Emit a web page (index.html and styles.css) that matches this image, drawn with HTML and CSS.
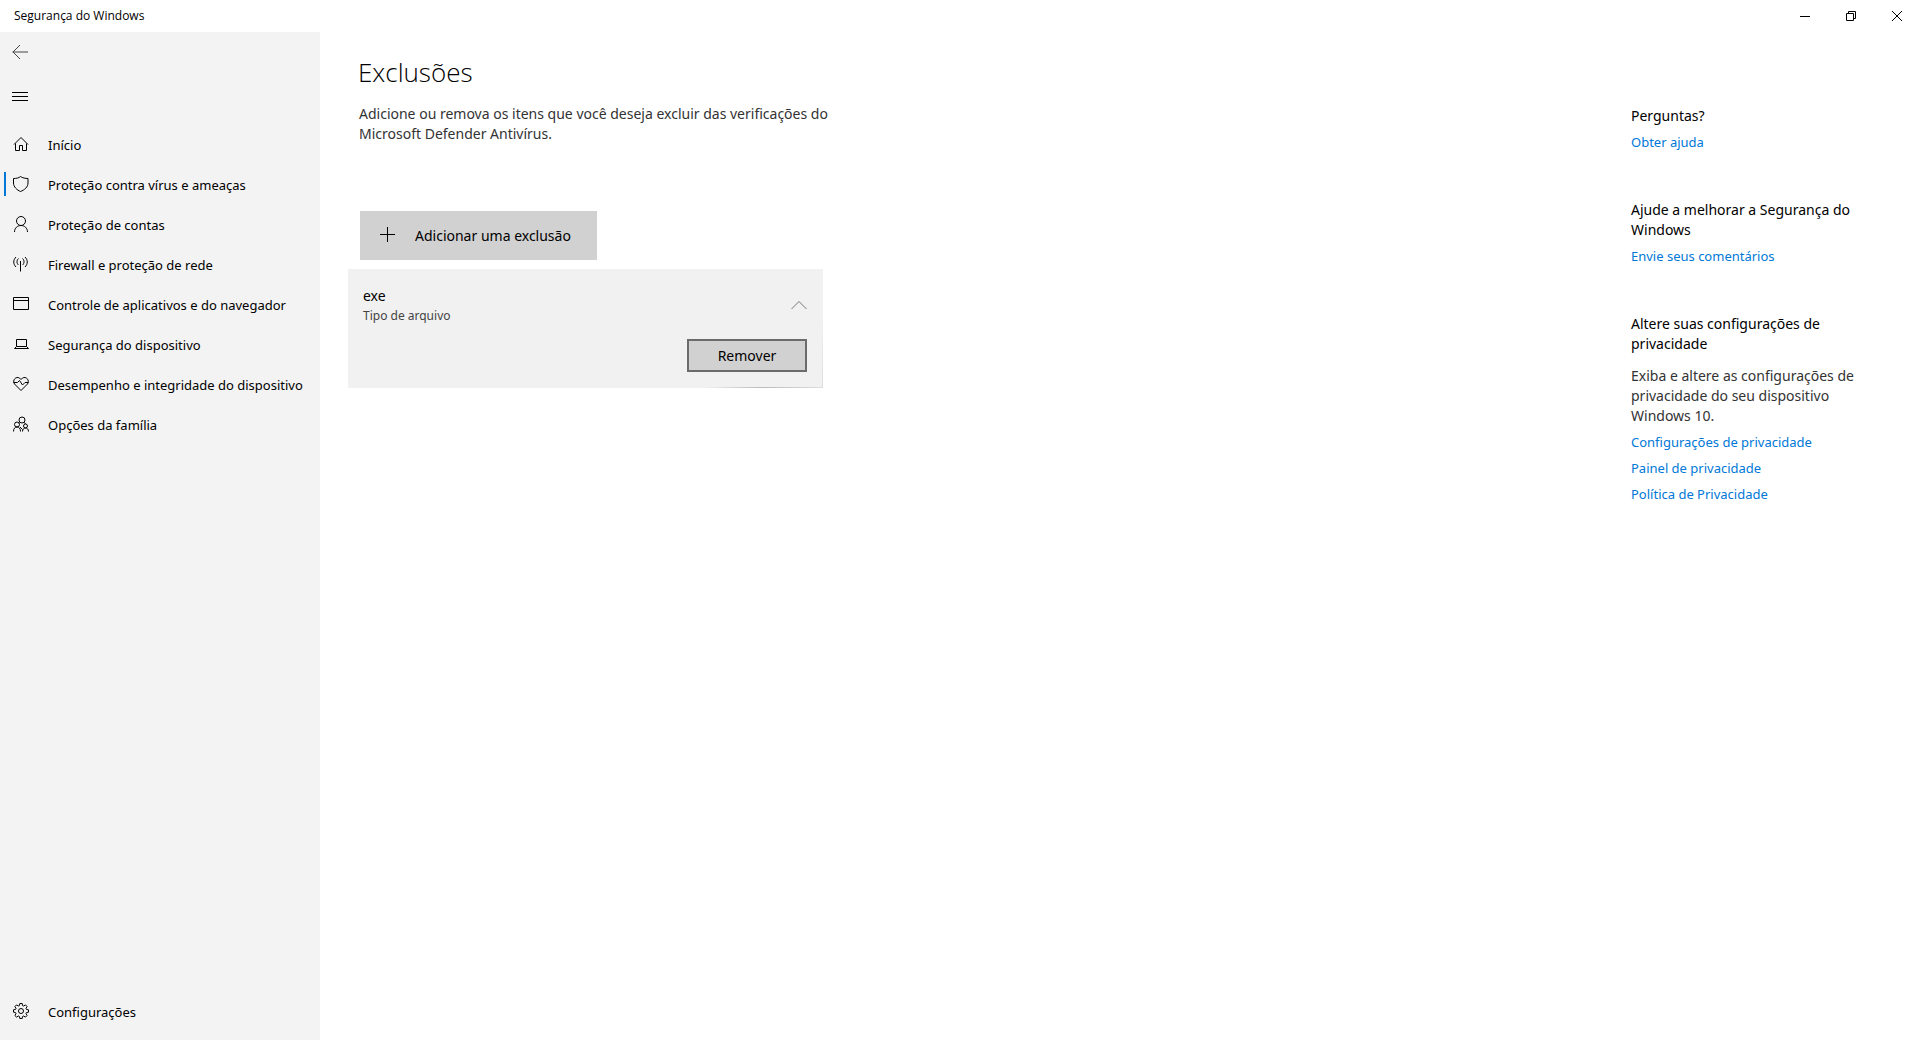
FILE: index.html
```html
<!DOCTYPE html>
<html lang="pt-BR">
<head>
<meta charset="utf-8">
<meta name="viewport" content="width=device-width, initial-scale=1">
<title>Segurança do Windows</title>
<link rel="stylesheet" href="styles.css">
</head>
<body>
<header class="titlebar">
  <span class="titlebar-text">Segurança do Windows</span>
  <div class="window-controls">
    <button type="button" class="window-button" aria-label="Minimizar"><svg width="10" height="10"><path d="M0 5.500H10"/></svg></button>
    <button type="button" class="window-button" aria-label="Restaurar"><svg width="10" height="10"><path d="M.5 2.500H7.500V9.500H.5ZM2.500 2.500V.5H9.500V7.500H7.500"/></svg></button>
    <button type="button" class="window-button" aria-label="Fechar"><svg width="10" height="10"><path d="M0 0L10 10M10 0L0 10"/></svg></button>
  </div>
</header>
<div class="app">
  <aside class="sidebar">
    <button type="button" class="icon-button" aria-label="Voltar"><svg class="icon icon-muted" viewBox="0 0 16 16"><path d="M.5 8H16M8 1L1 8L8 15"/></svg></button>
    <button type="button" class="icon-button" aria-label="Menu"><svg class="icon" viewBox="0 0 16 16"><path d="M0 4.500H16M0 8.500H16M0 12.500H16"/></svg></button>
    <nav class="nav">
      <a class="nav-item" href="#"><svg class="icon" viewBox="0 0 16 16"><path d="M1 8.500L8 1.500L15 8.500M2.500 7.500V14.500H6.500V9.500H9.500V14.500H13.500V7.500"/></svg><span>Início</span></a>
      <a class="nav-item nav-item-active" href="#" aria-current="page"><svg class="icon" viewBox="0 0 16 16"><path d="M7.500 .5C6 2 3 2.500.5 2.500V7C.5 11 4 14 7.500 15.500C11.500 14 15 11 15 7V2.500C12.500 2.500 9.500 2 7.500 .5Z"/></svg><span>Proteção contra vírus e ameaças</span></a>
      <a class="nav-item" href="#"><svg class="icon" viewBox="0 0 16 16"><circle cx="8" cy="5" r="4.500"/><path d="M1.500 16C1.500 12 4.500 9.500 8 9.500S14.500 12 14.500 16"/></svg><span>Proteção de contas</span></a>
      <a class="nav-item" href="#"><svg class="icon" viewBox="0 0 16 16"><path d="M7.500 5V15.500M5.500 2.500C3.500 4 3.500 7.500 5.500 9M9.500 2.500C11.500 4 11.500 7.500 9.500 9M3 1C0 4 0 8 3 11M12 1C15 4 15 8 12 11"/></svg><span>Firewall e proteção de rede</span></a>
      <a class="nav-item" href="#"><svg class="icon" viewBox="0 0 16 16"><path d="M.5 1.500H15.500V13.500H.5ZM.5 4.500H15.500"/></svg><span>Controle de aplicativos e do navegador</span></a>
      <a class="nav-item" href="#"><svg class="icon" viewBox="0 0 16 16"><path d="M3.500 3.500H13.500V10.500H3.500ZM3.500 10.500L1.500 12.500H15.500L13.500 10.500"/></svg><span>Segurança do dispositivo</span></a>
      <a class="nav-item" href="#"><svg class="icon" viewBox="0 0 16 16"><path d="M8 14.500L1.500 8C-1 4 3 0 6.500 2L8 3.500L9.500 2C13 0 17 4 14.500 8ZM.5 6.500H4.500L6.500 4.500L9.500 9L12 6.500H15.500"/></svg><span>Desempenho e integridade do dispositivo</span></a>
      <a class="nav-item" href="#"><svg class="icon" viewBox="0 0 16 16"><circle cx="9" cy="4" r="3"/><circle cx="4" cy="8.500" r="2.500"/><circle cx="12.500" cy="10" r="2"/><path d="M.5 15.500C.5 12.500 2 11 4 11S7.500 12.500 7.500 15.500M9.500 15.500C9.500 13 11 12 12.500 12S15.500 13 15.500 15.500M7 6.500L6 7.500M11 6.500C12 7 12.500 7.500 12.500 8M7 11L9.500 13.500"/></svg><span>Opções da família</span></a>
    </nav>
    <a class="nav-item nav-settings" href="#"><svg class="icon" viewBox="0 0 16 16"><circle cx="8" cy="8" r="2.500"/><path d="M6.800.5H9.200L9.600 2.600L10.700 3L12.500 1.900L14.100 3.500L13 5.300L13.400 6.400L15.500 6.800V9.200L13.400 9.600L13 10.700L14.100 12.500L12.500 14.100L10.700 13L9.600 13.400L9.200 15.500H6.800L6.400 13.400L5.300 13L3.500 14.100L1.900 12.500L3 10.700L2.600 9.600L.5 9.200V6.800L2.600 6.400L3 5.300L1.900 3.500L3.500 1.900L5.300 3L6.400 2.600Z"/></svg><span>Configurações</span></a>
  </aside>
  <main class="content">
    <h1 class="page-title">Exclusões</h1>
    <p class="page-intro">Adicione ou remova os itens que você deseja excluir das verificações do Microsoft Defender Antivírus.</p>
    <button type="button" class="add-button"><svg class="icon" viewBox="0 0 16 16"><path d="M7.500 0V15M0 7.500H15"/></svg><span>Adicionar uma exclusão</span></button>
    <section class="exclusion">
      <div class="exclusion-header">
        <div>
          <h2 class="exclusion-name">exe</h2>
          <p class="exclusion-type">Tipo de arquivo</p>
        </div>
        <button type="button" class="collapse-button" aria-label="Recolher"><svg class="icon" viewBox="0 0 16 16"><path d="M.5 11L8 3.500L15.500 11"/></svg></button>
      </div>
      <button type="button" class="remove-button">Remover</button>
    </section>
  </main>
  <aside class="help">
    <section class="help-group">
      <h2 class="help-title">Perguntas?</h2>
      <a class="help-link" href="#">Obter ajuda</a>
    </section>
    <section class="help-group">
      <h2 class="help-title">Ajude a melhorar a Segurança do Windows</h2>
      <a class="help-link" href="#">Envie seus comentários</a>
    </section>
    <section class="help-group">
      <h2 class="help-title">Altere suas configurações de privacidade</h2>
      <p class="help-text">Exiba e altere as configurações de privacidade do seu dispositivo Windows 10.</p>
      <a class="help-link" href="#">Configurações de privacidade</a>
      <a class="help-link" href="#">Painel de privacidade</a>
      <a class="help-link" href="#">Política de Privacidade</a>
    </section>
  </aside>
</div>
</body>
</html>
```
FILE: styles.css
```css
* { box-sizing: border-box; }

body {
  margin: 0;
  min-height: 100vh;
  display: flex;
  flex-direction: column;
  background: #fff;
  color: #000;
  font: 14px/20px "Noto Sans", "Open Sans", sans-serif;
}

h1, h2, p { margin: 0; font-weight: 400; }
a { text-decoration: none; }

button {
  padding: 0;
  border: 0;
  background: none;
  color: inherit;
  font: inherit;
}

svg {
  display: block;
  flex: none;
  fill: none;
  stroke: #000;
  stroke-width: 1;
}

.icon { width: 16px; height: 16px; }
.icon-muted { stroke: #444; }

.titlebar {
  display: flex;
  justify-content: space-between;
  align-items: center;
  height: 32px;
  padding-left: 14px;
}

.titlebar-text { font-family: "Open Sans", sans-serif; font-size: 12px; }
.window-controls { display: flex; height: 100%; }
.window-button { display: grid; place-items: center; width: 46px; }

.app { flex: 1; display: flex; }

.sidebar {
  flex: none;
  display: flex;
  flex-direction: column;
  width: 320px;
  padding-bottom: 8px;
  background: #f3f3f3;
}

.icon-button {
  display: flex;
  align-items: center;
  width: 48px;
  height: 48px;
  padding-left: 12px;
}

.icon-button:first-child { height: 40px; }

.nav { margin-top: 5px; }

.nav-item {
  display: flex;
  align-items: center;
  gap: 19px;
  height: 40px;
  padding-left: 13px;
  color: #000;
  font-size: 13px;
}

.nav-item .icon { margin-bottom: 2px; }
.nav-item-active { padding-left: 7px; }

.nav-item-active::before {
  content: "";
  width: 2px;
  height: 24px;
  margin: 0 -12px 2px -3px;
  background: #0078d7;
}

.nav-settings { margin-top: auto; }

.content { flex: 1; padding: 20px 38px; }

.page-title {
  font-family: "Open Sans", sans-serif;
  font-size: 26px;
  line-height: 40px;
  font-weight: 300;
}

.page-intro {
  max-width: 490px;
  margin-top: 12px;
  padding-left: 1px;
  color: #333;
}

.add-button {
  display: flex;
  align-items: center;
  gap: 19px;
  height: 49px;
  margin: 67px 0 9px 2px;
  padding: 0 26px 0 20px;
  background: #d1d1d1;
}

.add-button .icon { margin-bottom: 2px; }

.exclusion {
  display: flex;
  flex-direction: column;
  width: 475px;
  margin-left: -10px;
  padding: 17px 16px 16px 15px;
  background:
    linear-gradient(90deg, transparent 75%, #bbb 87%, #ddd) bottom / 100% 1px no-repeat,
    linear-gradient(transparent 40%, #ddd) right / 1px 100% no-repeat,
    #f1f1f1;
}

.exclusion-header {
  display: flex;
  justify-content: space-between;
  align-items: center;
}

.exclusion-name { font-size: 14px; }
.exclusion-type { color: #444; font-size: 12px; }
.collapse-button .icon { stroke: #777; }

.remove-button {
  align-self: flex-end;
  width: 120px;
  height: 33px;
  margin-top: 13px;
  border: 2px solid #6b6b6b;
  background: #d1d1d1;
}

.help {
  flex: none;
  display: flex;
  flex-direction: column;
  gap: 48px;
  width: 289px;
  padding: 74px 52px 0 0;
}

.help-group {
  display: flex;
  flex-direction: column;
  align-items: flex-start;
  gap: 6px;
}

.help-title { font-size: 14px; }
.help-text { margin-top: 6px; color: #333; }
.help-link { color: #0078d7; font-size: 13px; }
```
